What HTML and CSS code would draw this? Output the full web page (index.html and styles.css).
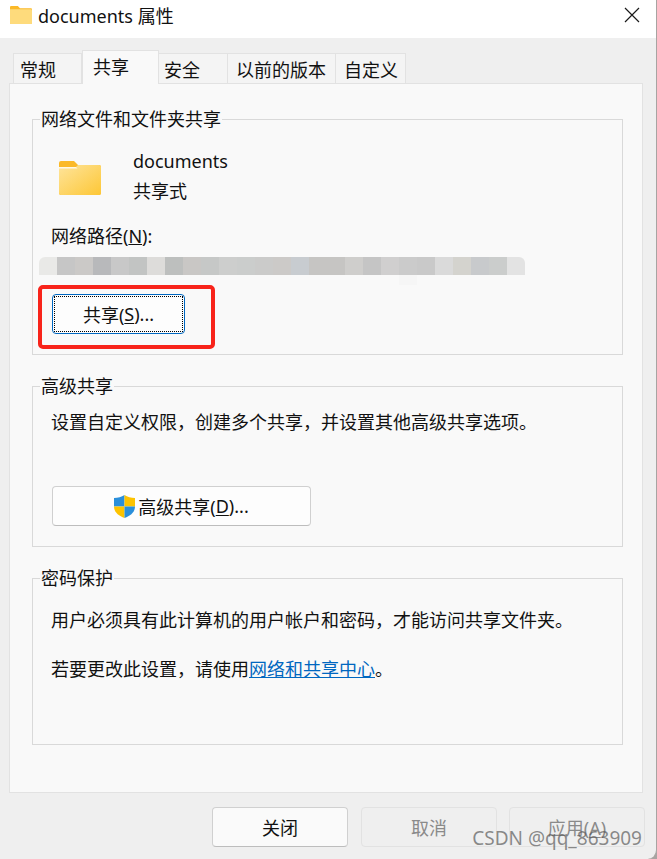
FILE: index.html
```html
<!DOCTYPE html>
<html lang="zh-CN">
<head>
    <meta charset="UTF-8">
    <title>documents 属性</title>
    <link rel="stylesheet" href="styles.css">
</head>
<body>
    <div class="dialog">
        <div class="title-bar">
            <svg class="title-icon" viewBox="0 0 42 34">
                <path d="M2 0h13l4 4h21a2 2 0 0 1 2 2v26a2 2 0 0 1-2 2H2a2 2 0 0 1-2-2V2a2 2 0 0 1 2-2z" fill="#fbb928"/>
                <path d="M0 6h40a2 2 0 0 1 2 2v24a2 2 0 0 1-2 2H2a2 2 0 0 1-2-2z" fill="#fedb7c"/>
            </svg>
            <span class="title-text">documents 属性</span>
            <svg class="close-icon" viewBox="0 0 16 16">
                <path d="M1 1l14 14M15 1L1 15" stroke="#1a1a1a" stroke-width="1.2" fill="none"/>
            </svg>
        </div>

        <div class="tabs">
            <div class="tab tab-general">常规</div>
            <div class="tab tab-active">共享</div>
            <div class="tab tab-security">安全</div>
            <div class="tab tab-versions">以前的版本</div>
            <div class="tab tab-custom">自定义</div>
        </div>

        <div class="panel">
            <fieldset class="group group-share">
                <legend>网络文件和文件夹共享</legend>
                <div class="folder-row">
                    <svg class="folder-icon" viewBox="0 0 42 34">
                        <defs>
                            <linearGradient id="folderFill" x1="0" y1="0" x2="1" y2="1">
                                <stop offset="0" stop-color="#fee49b"/>
                                <stop offset="1" stop-color="#fdc736"/>
                            </linearGradient>
                        </defs>
                        <path d="M2 0h13l4 4h21a2 2 0 0 1 2 2v26a2 2 0 0 1-2 2H2a2 2 0 0 1-2-2V2a2 2 0 0 1 2-2z" fill="#fbb928"/>
                        <path d="M0 6h17l2-2h21a2 2 0 0 1 2 2v26a2 2 0 0 1-2 2H2a2 2 0 0 1-2-2z" fill="url(#folderFill)"/>
                        <path d="M0 6h17l1.500 1.500H0z" fill="#fff8e6"/>
                    </svg>
                    <div class="folder-info">
                        <div>documents</div>
                        <div>共享式</div>
                    </div>
                </div>
                <div class="path-label">网络路径(<u>N</u>):</div>
                <div class="path-blur"></div>
                <button class="btn btn-focus"><span class="focus-ring">共享(<u>S</u>)...</span></button>
                <div class="red-box"></div>
            </fieldset>

            <fieldset class="group group-advanced">
                <legend>高级共享</legend>
                <p class="group-text">设置自定义权限，创建多个共享，并设置其他高级共享选项。</p>
                <button class="btn btn-wide">
                    <svg class="shield" viewBox="0 0 22 24">
                        <path d="M11 0C8 2 4 3 0 3v9h11z" fill="#2a8fdb"/>
                        <path d="M11 0c3 2 7 3 11 3v9H11z" fill="#fdc300"/>
                        <path d="M0 12c0 6 5 10 11 12V12z" fill="#fdc300"/>
                        <path d="M22 12c0 6-5 10-11 12V12z" fill="#2a8fdb"/>
                    </svg>高级共享(<u>D</u>)...
                </button>
            </fieldset>

            <fieldset class="group group-password">
                <legend>密码保护</legend>
                <p class="group-text">用户必须具有此计算机的用户帐户和密码，才能访问共享文件夹。</p>
                <p class="group-text second">若要更改此设置，请使用<a href="#">网络和共享中心</a>。</p>
            </fieldset>
        </div>

        <div class="footer">
            <button class="btn btn-footer btn-close">关闭</button>
            <button class="btn btn-footer" disabled>取消</button>
            <button class="btn btn-footer" disabled>应用(<u>A</u>)</button>
        </div>

        <div class="watermark">CSDN @qq_863909</div>
    </div>
</body>
</html>
```

FILE: styles.css
```css
* {
    box-sizing: border-box;
}

body {
    margin: 0;
    background-color: #a8a4a2;
    font-family: "Noto Sans", "Noto Sans CJK SC", sans-serif;
    font-size: 18px;
    color: #111;
}

.dialog {
    position: relative;
    width: 657px;
    height: 859px;
    background-color: #efefef;
    border-right: 1px solid #a8a4a2;
    border-bottom-right-radius: 9px;
    overflow: hidden;
}

.title-bar {
    display: flex;
    align-items: center;
    height: 38px;
    padding-left: 10px;
    padding-bottom: 8px;
    background-color: #fff;
}

.title-icon {
    width: 22px;
    height: 18px;
}

.title-text {
    margin-left: 6px;
}

.close-icon {
    width: 16px;
    height: 16px;
    margin-left: auto;
    margin-right: 16px;
}

.tabs {
    display: flex;
    align-items: flex-end;
    height: 45px;
    padding-left: 13px;
}

.tab {
    height: 30px;
    background-color: #f4f4f4;
    border: 1px solid #e2e2e2;
    border-bottom: none;
    border-left: none;
    line-height: 32px;
}

.tab-general {
    width: 69px;
    padding-left: 6px;
    border-left: 1px solid #e2e2e2;
}

.tab-active {
    position: relative;
    width: 77px;
    height: 34px;
    padding-left: 10px;
    margin-bottom: -1px;
    background-color: #f9f9f9;
    border-left: 1px solid #e2e2e2;
    line-height: 33px;
}

.tab-security {
    width: 69px;
    padding-left: 5px;
}

.tab-versions {
    width: 108px;
    padding-left: 8px;
}

.tab-custom {
    width: 70px;
    padding-left: 8px;
}

.panel {
    width: 634px;
    height: 710px;
    margin-left: 9px;
    padding: 23px 19px 0 22px;
    background-color: #f9f9f9;
    border: 1px solid #e2e2e2;
}

.group {
    position: relative;
    margin: 0;
    padding: 0 18px;
    min-width: 0;
    border: 1px solid #d9d9d9;
}

.group legend {
    margin-left: -11px;
    padding: 0 1px;
    line-height: 24px;
}

.group-share {
    height: 248px;
}

.group-advanced {
    height: 173px;
    margin-top: 19px;
}

.group-password {
    height: 179px;
    margin-top: 19px;
}

.folder-row {
    display: flex;
    align-items: center;
    margin-top: 15px;
    margin-left: 8px;
}

.folder-icon {
    width: 42px;
    height: 34px;
}

.folder-info {
    margin-left: 32px;
    margin-bottom: 4px;
    line-height: 30px;
}

.path-label {
    margin-top: 13px;
    line-height: 26px;
}

/* blurred-out path in the original shot */
.path-blur {
    position: relative;
    width: 486px;
    height: 18px;
    margin-top: 8px;
    margin-left: -12px;
    border-radius: 6px 6px 0 0;
    background-image: linear-gradient(90deg,
        #e9e9e7 0 18px, #c6c6c6 18px 36px, #cbc9c7 36px 54px, #b8b9bb 54px 72px,
        #c8c8c8 72px 90px, #c2c4c3 90px 108px, #dddcda 108px 126px, #bdbfbe 126px 144px,
        #c9c7c5 144px 162px, #c6c8c7 162px 180px, #cdcecd 180px 198px, #cbcdcc 198px 216px,
        #cbcbca 216px 234px, #cccac8 234px 252px, #c8ccd0 252px 270px, #c6c5c3 270px 306px,
        #cfcecc 306px 324px, #c5c5c5 324px 342px, #d0cfcf 342px 360px, #cbcbcb 360px 378px,
        #c9c9c9 378px 396px, #dadada 396px 414px, #d4d3ce 414px 432px, #c8cacc 432px 450px,
        #cbcdcc 450px 468px, #e3e3e3 468px 486px);
}

.path-blur::after {
    content: "";
    position: absolute;
    left: 360px;
    top: 18px;
    width: 18px;
    height: 10px;
    background-color: #f6f6f6;
}

.btn {
    font-family: inherit;
    font-size: 18px;
    color: #111;
    height: 40px;
    padding: 0;
    background-color: #fdfdfd;
    border: 1px solid #d0d0d0;
    border-bottom-color: #bdbdbd;
    border-radius: 4px;
}

.btn u {
    text-underline-offset: 2px;
}

.btn-focus {
    display: flex;
    width: 133px;
    margin-top: 19px;
    margin-left: 1px;
    padding: 1px;
    border-color: #0067c0;
}

.focus-ring {
    display: flex;
    flex: 1;
    justify-content: center;
    align-items: center;
    border: 1px dotted #000;
    white-space: pre;
}

.red-box {
    position: absolute;
    left: 5px;
    top: 154px;
    width: 177px;
    height: 64px;
    border: 4px solid #f8231a;
    border-radius: 5px;
}

.group-text {
    margin: 0;
    line-height: 26px;
}

.group-advanced .group-text {
    margin-top: 11px;
}

.group-password .group-text {
    margin-top: 17px;
}

.group-password .second {
    margin-top: 23px;
}

.btn-wide {
    display: flex;
    justify-content: center;
    align-items: center;
    width: 259px;
    margin-top: 51px;
    margin-left: 1px;
}

.shield {
    width: 21px;
    height: 23px;
    margin-right: 3px;
}

a {
    color: #0067c0;
}

.footer {
    display: flex;
    justify-content: flex-end;
    gap: 12px;
    margin-top: 14px;
    padding-right: 11px;
}

.btn-footer {
    width: 136px;
    background-color: #fafafa;
}

.btn-close {
    margin-right: 1px;
}

.btn-footer:disabled {
    color: #8a8a8a;
    background-color: #efefef;
    border-color: #e2e2e2;
}

.watermark {
    position: absolute;
    right: 14px;
    top: 825px;
    font-family: "Noto Sans", sans-serif;
    font-size: 19px;
    color: rgba(90, 90, 90, 0.7);
}
```
